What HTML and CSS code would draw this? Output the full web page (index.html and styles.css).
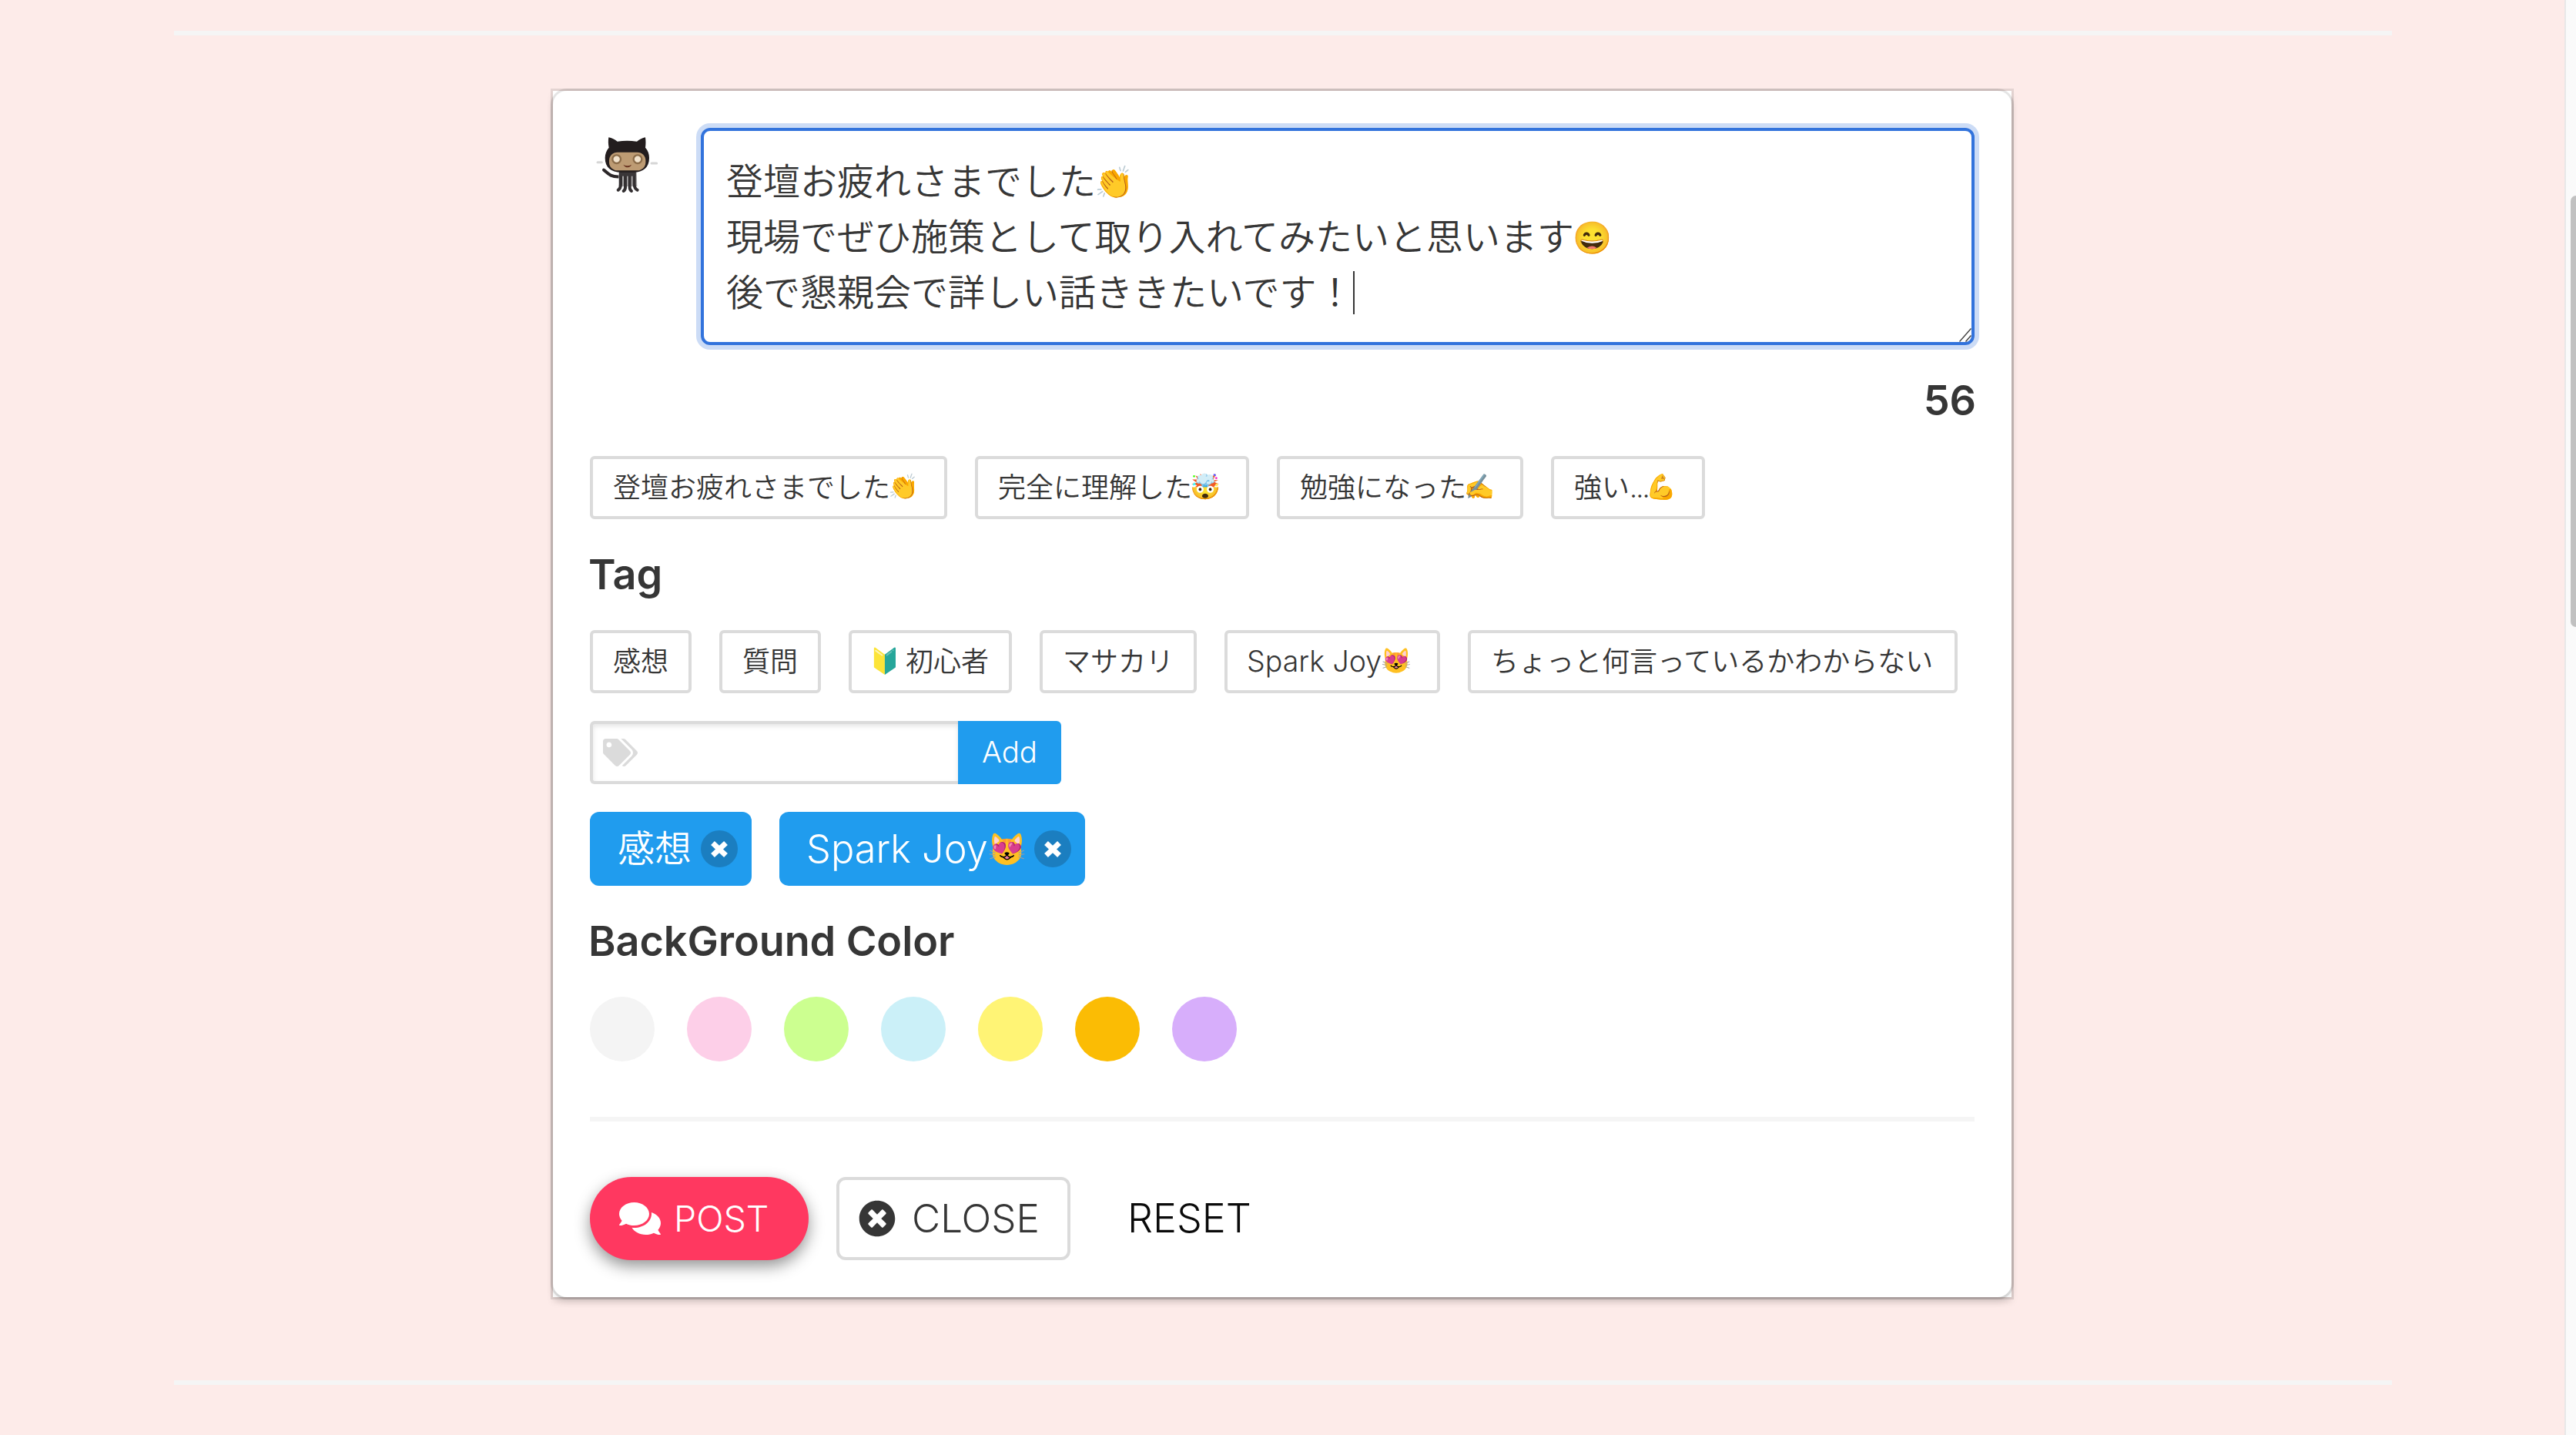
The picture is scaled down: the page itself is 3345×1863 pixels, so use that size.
FILE: index.html
```html
<!DOCTYPE html>
<html lang="ja">
<head>
<meta charset="utf-8">
<title>Post</title>
<link rel="stylesheet" href="styles.css">
</head>
<body>
<main class="page">
  <hr class="rule">
  <section class="card">
    <div class="box">
      <div class="media">
        <svg class="avatar" viewBox="6 18 288 288">
          <g stroke="#d6d6d6" stroke-width="9" stroke-linecap="round"><path d="M36 152h16M246 156h20"/></g>
          <path d="M60 182c14 10 22 28 62 26" fill="none" stroke="#2b2628" stroke-width="12" stroke-linecap="round"/>
          <path d="M118 190h70l2 56h-72z" fill="#a9a7a8"/>
          <g fill="none" stroke="#332f31" stroke-width="12" stroke-linecap="round"><path d="M126 190v48q0 16-10 22M144 190v60q0 10-7 14M161 190v60q0 10 7 14M179 190v48q0 16 12 22"/></g>
          <path d="M122 176h62v30h-62z" fill="#3a3638"/>
          <path d="M79 55c12 2 24 8 34 16 26-4 50-4 76 0 10-8 22-14 33-16 2 14 2 26 0 40 10 10 15 24 15 40 0 38-24 56-60 56h-50c-38 0-62-18-62-56 0-16 6-30 15-40-3-14-3-28-1-40z" fill="#231d1e"/>
          <rect x="81" y="113" width="142" height="71" rx="32" fill="#bd9b73"/>
          <g fill="#f2e3cd" stroke="#8c6d4a" stroke-width="7"><circle cx="110" cy="140" r="16"/><circle cx="192" cy="140" r="16"/></g>
          <path d="M136 161q16 10 32 0-4 10-14 11-12 0-18-11z" fill="#6a3420"/>
        </svg>
        <div class="textarea">
          <div class="line">登壇お疲れさまでした<span class="emoji">👏</span></div>
          <div class="line">現場でぜひ施策として取り入れてみたいと思います<span class="emoji">😄</span></div>
          <div class="line">後で懇親会で詳しい話ききたいです！<span class="caret"></span></div>
          <svg class="grip" viewBox="0 0 16 18"><path d="M.5 17.5L15.500.5M8.500 17.500l7-8" stroke="#444" stroke-width="1.500" fill="none"/></svg>
        </div>
      </div>
      <div class="title count">56</div>
      <div class="buttons">
        <span class="button">登壇お疲れさまでした<span class="emoji">👏</span></span>
        <span class="button">完全に理解した<span class="emoji">🤯</span></span>
        <span class="button">勉強になった<span class="emoji">✍</span></span>
        <span class="button">強い<span class="dots">...</span><span class="emoji">💪</span></span>
      </div>
      <div class="title">Tag</div>
      <div class="buttons">
        <span class="button">感想</span>
        <span class="button">質問</span>
        <span class="button"><span class="emoji">🔰</span>初心者</span>
        <span class="button">マサカリ</span>
        <span class="button"><span class="latin">Spark Joy</span><span class="emoji">😻</span></span>
        <span class="button wide">ちょっと何言っているかわからない</span>
      </div>
      <div class="field">
        <div class="input">
          <svg class="tags-icon" viewBox="0 0 640 512"><path d="M497.941 225.941L286.059 14.059A48 48 0 0 0 252.118 0H48C21.490 0 0 21.490 0 48v204.118a48 48 0 0 0 14.059 33.941l211.882 211.882c18.744 18.745 49.136 18.746 67.882 0l204.118-204.118c18.745-18.745 18.745-49.137 0-67.882zM112 160c-26.510 0-48-21.490-48-48s21.490-48 48-48 48 21.490 48 48-21.490 48-48 48zm513.941 133.823L421.823 497.941c-18.745 18.745-49.137 18.745-67.882 0l-.36-.36L527.640 323.522c16.999-16.999 26.360-39.600 26.360-63.640s-9.362-46.641-26.360-63.640L331.397 0h48.721a48 48 0 0 1 33.941 14.059l211.882 211.882c18.745 18.745 18.745 49.137 0 67.882z"/></svg>
        </div>
        <span class="add">Add</span>
      </div>
      <div class="chips">
        <span class="chip"><span>感想</span><svg class="delete" viewBox="0 0 48 48"><circle cx="24" cy="24" r="24"/><path d="M15.500 16.500l17 16M32.500 16.500l-17 16"/></svg></span>
        <span class="chip"><span class="latin">Spark Joy</span><span class="emoji">😻</span><svg class="delete" viewBox="0 0 48 48"><circle cx="24" cy="24" r="24"/><path d="M15.500 16.500l17 16M32.500 16.500l-17 16"/></svg></span>
      </div>
      <div class="title">BackGround Color</div>
      <div class="swatches">
        <span class="swatch gray"></span><span class="swatch pink"></span><span class="swatch green"></span><span class="swatch blue"></span><span class="swatch yellow"></span><span class="swatch orange"></span><span class="swatch purple"></span>
      </div>
      <hr class="divider">
      <div class="actions">
        <span class="post"><svg class="comments-icon" viewBox="0 0 576 512"><path d="M416 192c0-88.400-93.100-160-208-160S0 103.600 0 192c0 34.300 14.100 65.900 38 92-13.400 30.200-35.500 54.200-35.800 54.500-2.200 2.300-2.800 5.700-1.500 8.700S4.800 352 8 352c36.600 0 66.900-12.300 88.700-25 32.200 15.700 70.300 25 111.300 25 114.900 0 208-71.600 208-160zm122 220c23.900-26 38-57.700 38-92 0-66.900-53.500-124.200-129.300-148.100.9 6.600 1.300 13.300 1.300 20.100 0 105.900-107.700 192-240 192-10.800 0-21.300-.8-31.700-1.900C207.800 439.600 281.800 480 368 480c41 0 79.100-9.200 111.300-25 21.800 12.700 52.100 25 88.700 25 3.200 0 6.100-1.900 7.300-4.800 1.300-2.900.7-6.300-1.500-8.700-.3-.3-22.400-24.200-35.800-54.500z"/></svg>POST</span>
        <span class="close"><svg class="close-icon" viewBox="0 0 512 512"><path d="M256 8C119 8 8 119 8 256s111 248 248 248 248-111 248-248S393 8 256 8zm121.600 313.100c4.700 4.700 4.700 12.300 0 17L338 377.600c-4.700 4.700-12.300 4.700-17 0L256 312l-65.100 65.600c-4.700 4.700-12.300 4.700-17 0L134.400 338c-4.700-4.700-4.700-12.300 0-17l65.600-65-65.600-65.100c-4.700-4.700-4.700-12.300 0-17l39.600-39.600c4.700-4.700 12.300-4.700 17 0l65 65.700 65.100-65.600c4.700-4.700 12.300-4.700 17 0l39.600 39.600c4.700 4.700 4.700 12.300 0 17L312 256l65.600 65.100z"/></svg>CLOSE</span>
        <span class="reset">RESET</span>
      </div>
    </div>
  </section>
  <hr class="rule">
</main>
<aside class="scrollbar"><div class="thumb"></div></aside>
</body>
</html>
```
FILE: styles.css
```css
* { box-sizing: border-box; }

body {
  margin: 0;
  display: flex;
  height: 1863px;
  overflow: hidden;
  background: #fdebe9;
  color: #363636;
  font-family: Inter, "Noto Sans CJK JP", sans-serif;
  font-weight: 350;
}

.page { width: 3330px; padding: 40px 224px 0 226px; flex: none; }
.rule { width: 2880px; height: 6px; margin: 0; border: 0; background: #f5f5f5; }

.card {
  width: 1894px;
  margin: 72px 0 108px 492px;
  background: #fff;
  box-shadow: 0 6px 9px rgba(10, 10, 10, .1), 0 0 0 3px rgba(10, 10, 10, .1);
}
.box {
  padding: 48px;
  border-radius: 18px;
  background: #fff;
  box-shadow: 0 6px 9px rgba(10, 10, 10, .1), 0 0 0 3px rgba(10, 10, 10, .1);
}

.media { display: flex; gap: 48px; }
.avatar { width: 96px; height: 96px; flex: none; }

.textarea {
  position: relative;
  width: 1654px;
  height: 282px;
  padding: 30px 30px 28px 29px;
  border: 4px solid #3273dc;
  border-radius: 12px;
  box-shadow: 0 0 0 6px rgba(50, 115, 220, .25);
  font-size: 48px;
}
.line { display: flex; align-items: center; height: 72px; line-height: 72px; white-space: nowrap; }
.caret { width: 2px; height: 56px; background: #363636; margin-left: -1px; }
.grip { position: absolute; right: 0; bottom: 0; width: 16px; height: 18px; }

.emoji { display: inline-block; width: 47px; height: 82px; margin-left: -3px; line-height: 80px; font-size: 32px; white-space: nowrap; }
.line .emoji, .chip .emoji { width: 50px; height: 72px; margin-left: -2px; line-height: 72px; font-size: 41px; }

.title { height: 144px; margin-left: -2px; line-height: 144px; font-size: 54px; font-weight: 600; letter-spacing: -.1px; }
.count { margin: 0 -2px 0 0; text-align: right; }

.buttons { display: flex; gap: 36px; }
.button {
  display: flex;
  align-items: center;
  height: 82px;
  padding: 0 26px;
  border: 4px solid #dbdbdb;
  border-radius: 6px;
  font-size: 36px;
  line-height: 72px;
  white-space: nowrap;
}
.button.wide { padding-right: 28px; }
.button .latin { width: 176px; font-size: 37.500px; margin: 0 1px 0 -1px; }
.dots { width: 24px; letter-spacing: -2px; }

.field { display: flex; margin-top: 36px; }
.input {
  display: flex;
  align-items: center;
  width: 478px;
  height: 82px;
  padding-left: 13px;
  border: 4px solid #dbdbdb;
  border-right: 0;
  border-radius: 6px 0 0 6px;
  box-shadow: inset 0 3px 6px rgba(10, 10, 10, .1);
}
.tags-icon { width: 45px; height: 36px; fill: #dbdbdb; }
.add {
  width: 134px;
  border-radius: 0 6px 6px 0;
  background: #209cee;
  color: #fff;
  font-size: 38.500px;
  line-height: 80px;
  text-align: center;
}

.chips { display: flex; gap: 36px; margin-top: 36px; }
.chip {
  display: flex;
  align-items: center;
  height: 96px;
  padding: 0 18px 0 36px;
  border-radius: 12px;
  background: #209cee;
  color: #fff;
  font-size: 48px;
  line-height: 96px;
  white-space: nowrap;
}
.chip .latin { width: 236px; margin: 0 1px 0 -1px; font-size: 50.500px; }
.delete { width: 48px; height: 48px; margin-left: 12px; }
.chip .emoji + .delete { margin-left: 11px; }
.delete circle { fill: rgba(10, 10, 10, .2); }
.delete path { fill: none; stroke: #fff; stroke-width: 7px; }

.swatches { display: flex; gap: 42px; }
.swatch { width: 84px; height: 84px; border-radius: 50%; }
.gray { background: #f4f4f4; }
.pink { background: #fdcfe8; }
.green { background: #ccff90; }
.blue { background: #cbf0f8; }
.yellow { background: #fff475; }
.orange { background: #fbbc04; }
.purple { background: #d7aefb; }

.divider { height: 6px; margin: 72px 0; border: 0; background: #f5f5f5; }

.actions { display: flex; height: 108px; line-height: 108px; }
.post, .close, .reset { display: flex; align-items: center; white-space: nowrap; }
.post {
  width: 284px;
  padding-left: 38px;
  border-radius: 54px;
  background: #ff3860;
  box-shadow: 0 8px 20px rgba(0, 0, 0, .42);
  color: #fff;
  font-size: 46.500px;
}
.comments-icon { width: 54px; height: 48px; margin-right: 17px; fill: #fff; }
.close {
  width: 304px;
  margin-left: 36px;
  padding-left: 25px;
  border: 4px solid #dbdbdb;
  border-radius: 12px;
  font-size: 51px;
}
.close-icon { width: 48px; height: 48px; margin-right: 21px; fill: #363636; }
.reset { margin-left: 74px; color: #0a0a0a; font-size: 52px; }

.scrollbar {
  width: 15px;
  padding: 254px 0 0 6px;
  border-left: 2px solid #e8e8e8;
  background: #fafafa;
}
.thumb { height: 560px; border-radius: 7px 0 0 7px; background: #c1c1c1; }
```
